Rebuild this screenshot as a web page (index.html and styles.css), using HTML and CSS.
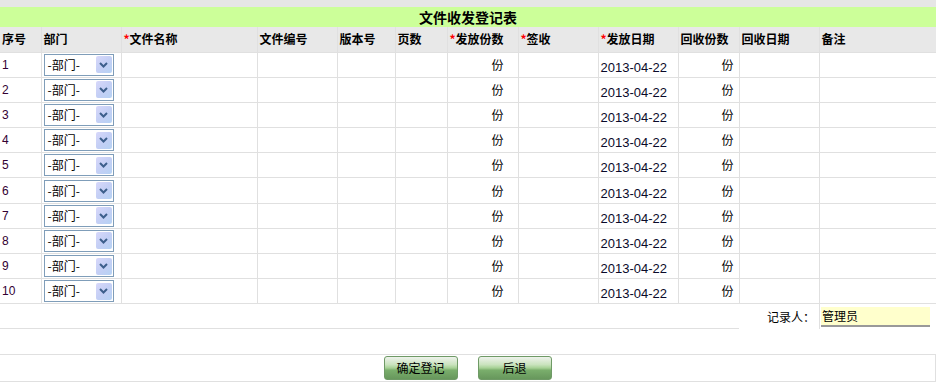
FILE: index.html
```html
<!DOCTYPE html>
<html>
<head>
  <meta charset="utf-8">
  <link rel="stylesheet" href="styles.css">
</head>
<body>
  <div class="topbar"></div>
  <div class="title">文件收发登记表</div>

  <table class="register">
    <colgroup>
      <col style="width:41px"><col style="width:80px"><col style="width:136px"><col style="width:80px">
      <col style="width:58px"><col style="width:52px"><col style="width:71px"><col style="width:80px">
      <col style="width:80px"><col style="width:61px"><col style="width:80px"><col>
    </colgroup>
    <thead>
      <tr>
        <th>序号</th>
        <th>部门</th>
        <th><span class="req">*</span>文件名称</th>
        <th>文件编号</th>
        <th>版本号</th>
        <th>页数</th>
        <th><span class="req">*</span>发放份数</th>
        <th><span class="req">*</span>签收</th>
        <th><span class="req">*</span>发放日期</th>
        <th>回收份数</th>
        <th>回收日期</th>
        <th>备注</th>
      </tr>
    </thead>
    <tbody id="rows"></tbody>
  </table>

  <div class="recorder">
    <div class="recorder__fill"></div>
    <div class="recorder__label">记录人：</div>
    <div class="recorder__cell"><span class="recorder__input">管理员</span></div>
  </div>

  <div class="spacer"></div>

  <div class="actions">
    <button class="btn" type="button">确定登记</button>
    <button class="btn" type="button">后退</button>
  </div>

  <script>
    const rows = document.querySelector('#rows');
    const arrow = '<span class="dept__arrow"><svg width="9" height="6" viewBox="0 0 9 6"><path d="M1 1 L4.5 4.5 L8 1" fill="none" stroke="#3d5f8c" stroke-width="2"/></svg></span>';

    for (let i = 1; i <= 10; i++) {
      const tr = document.createElement('tr');
      tr.innerHTML =
        `<td class="num">${i}</td>` +
        `<td><div class="dept"><span class="dept__text">-部门-</span>${arrow}</div></td>` +
        '<td></td><td></td><td></td><td></td>' +
        '<td class="copies">份</td>' +
        '<td></td>' +
        '<td class="date">2013-04-22</td>' +
        '<td class="copies copies--back">份</td>' +
        '<td></td><td></td>';
      rows.appendChild(tr);
    }
  </script>
</body>
</html>
```

FILE: styles.css
```css
body {
  margin: 0;
  font-family: "Noto Sans CJK SC", "Liberation Sans", sans-serif;
  font-size: 12px;
  line-height: 16px;
  color: #000;
  background: #fff;
}

.topbar {
  height: 7px;
  background-color: #e6e6e6;
}

.title {
  height: 20px;
  line-height: 20px;
  background-color: #ccff99;
  text-align: center;
  font-size: 14px;
  font-weight: bold;
}

.register {
  width: 936px;
  border-collapse: collapse;
  table-layout: fixed;
}

.register th,
.register td {
  padding: 0 2px;
  border: 1px solid #e0e0e0;
  border-top: 0;
  text-align: left;
  vertical-align: middle;
  white-space: nowrap;
}

.register th:first-child,
.register td:first-child {
  border-left: 0;
}

.register th:last-child,
.register td:last-child {
  border-right: 0;
}

.register thead tr {
  height: 25px;
}

.register th {
  background-color: #e8e8e8;
  font-weight: bold;
}

.register tbody tr {
  height: 25.2px;
}

.req {
  color: #ff0000;
}

.num {
  color: #330033;
  font-family: "Liberation Sans", sans-serif;
}

.dept {
  display: flex;
  align-items: center;
  justify-content: space-between;
  box-sizing: border-box;
  width: 70px;
  height: 22px;
  padding: 0 1px 0 3px;
  border: 1px solid #7f9db9;
  background: #fff;
}

.dept__arrow {
  display: flex;
  align-items: center;
  justify-content: center;
  width: 16px;
  height: 17px;
  border-radius: 2px;
  background: linear-gradient(135deg, #d8d8fa 0%, #c4cff5 50%, #b6d2f4 100%);
}

.copies {
  text-align: right !important;
  padding-right: 14px !important;
}

.copies--back {
  padding-right: 5px !important;
}

.date {
  font-family: "Liberation Sans", sans-serif;
  font-size: 13px;
  color: #0a0a2a;
  padding-top: 6px !important;
}

.recorder {
  display: flex;
  height: 25px;
}

.recorder__fill {
  width: 739px;
  border-bottom: 1px solid #e0e0e0;
}

.recorder__label {
  width: 76px;
  padding-right: 4px;
  line-height: 25px;
  text-align: right;
}

.recorder__cell {
  flex: 1;
  padding: 3px 6px 0 1px;
  border-left: 1px solid #e0e0e0;
}

.recorder__input {
  display: block;
  height: 18px;
  line-height: 18px;
  padding-left: 1px;
  background-color: #ffffcc;
  border-bottom: 2px solid #999;
}

.spacer {
  height: 25px;
}

.actions {
  display: flex;
  justify-content: center;
  align-items: center;
  gap: 20px;
  height: 26px;
  border: 1px solid #e0e0e0;
  border-left: 0;
}

.btn {
  width: 74px;
  height: 24px;
  padding: 0;
  border: 1px solid #6f9a66;
  border-radius: 3px;
  font-family: inherit;
  font-size: 12px;
  line-height: 16px;
  color: #000;
  background: linear-gradient(#eef2ec 0%, #c9e3bd 35%, #a6d195 50%, #7aae6c 60%, #67975c 100%);
}
```
